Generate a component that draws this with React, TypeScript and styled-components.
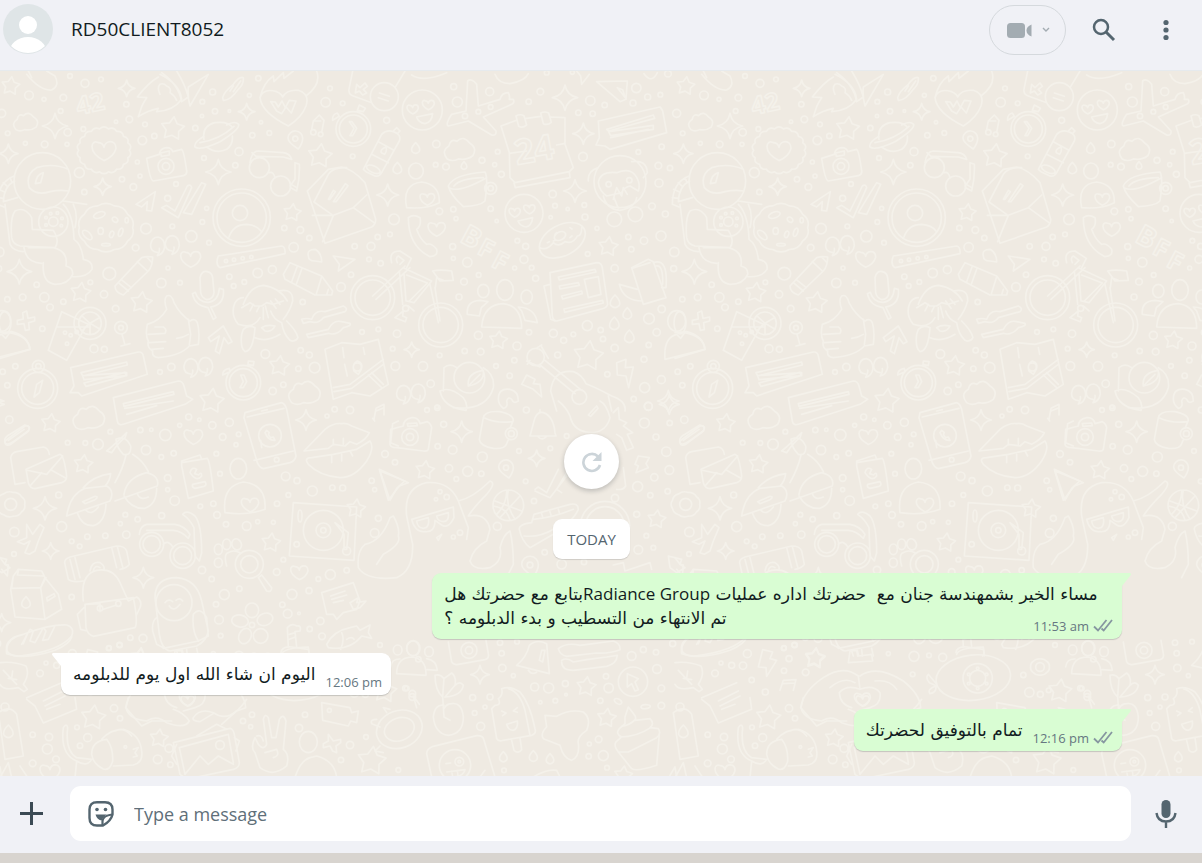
import React from "react";
import styled, { createGlobalStyle } from "styled-components";

const GlobalStyle = createGlobalStyle`
  * { box-sizing: border-box; }
  body { margin: 0; background: #d8d4cf; }
  button, input { font: inherit; border: 0; background: none; padding: 0; margin: 0; }
  button { cursor: pointer; }
`;

/* ---------- wallpaper ---------- */

type Group = {
  dx: number;
  dy: number;
  rings?: number[];
  stars?: number[];
  sparks?: number[];
  hearts?: number[];
  drops?: number[];
  pins?: number[];
  quotes?: number[];
  clouds?: number[];
  ellipses?: number[];
  scallops?: number[];
  lines?: string;
  words?: [string, number, number, number, number][];
};

const chunk = (list: number[] = [], size: number) => {
  const out: number[][] = [];
  for (let i = 0; i < list.length; i += size) out.push(list.slice(i, i + size));
  return out;
};

const ring = ([x, y, r]: number[]) =>
  `M${x - r} ${y}a${r} ${r} 0 1 0 ${2 * r} 0a${r} ${r} 0 1 0 ${-2 * r} 0Z`;

const ellipse = ([x, y, rx, ry, a]: number[]) => {
  const t = (a * Math.PI) / 180;
  const cx = rx * Math.cos(t);
  const cy = rx * Math.sin(t);
  return `M${x - cx} ${y - cy}A${rx} ${ry} ${a} 1 0 ${x + cx} ${y + cy}A${rx} ${ry} ${a} 1 0 ${x - cx} ${y - cy}Z`;
};

const star = ([x, y, r]: number[]) => {
  let d = "";
  for (let i = 0; i < 10; i++) {
    const a = (i * Math.PI) / 5 - Math.PI / 2 + 0.12;
    const q = i % 2 ? r * 0.55 : r;
    d += `${i ? "L" : "M"}${(x + q * Math.cos(a)).toFixed(1)} ${(y + q * Math.sin(a)).toFixed(1)}`;
  }
  return d + "Z";
};

const spark = ([x, y, r]: number[]) => {
  const k = r * 0.16;
  return `M${x} ${y - r}Q${x + k} ${y - k} ${x + r} ${y}Q${x + k} ${y + k} ${x} ${y + r}Q${x - k} ${y + k} ${x - r} ${y}Q${x - k} ${y - k} ${x} ${y - r}Z`;
};

const heart = ([x, y, s]: number[]) =>
  `M${x} ${y + s * 0.8}C${x - s * 1.5} ${y} ${x - s} ${y - s} ${x - s * 0.5} ${y - s * 0.7}Q${x - s * 0.1} ${y - s * 0.7} ${x} ${y - s * 0.3}C${x + s * 0.1} ${y - s * 0.9} ${x + s} ${y - s} ${x + s} ${y - s * 0.2}Q${x + s * 0.8} ${y + s * 0.5} ${x} ${y + s * 0.8}Z`;

const drop = ([x, y, s]: number[]) =>
  `M${x} ${y - s}Q${x + s} ${y} ${x + s * 0.6} ${y + s * 0.6}Q${x} ${y + s * 1.2} ${x - s * 0.6} ${y + s * 0.6}Q${x - s} ${y} ${x} ${y - s}Z`;

const pin = ([x, y, s]: number[]) =>
  `M${x + s * 0.4} ${y + s * 1.4}Q${x - s} ${y + s * 0.5} ${x - s} ${y - s * 0.1}A${s} ${s} 0 1 1 ${x + s} ${y}Q${x + s} ${y + s * 0.6} ${x + s * 0.4} ${y + s * 1.4}Z${ring([x, y, s * 0.35])}`;

const quote = ([x, y]: number[]) => {
  const one = (q: number, p: number) =>
    `M${q} ${p}q-22 -2 -20 -24q4 -22 22 -22q20 4 20 30q-4 22 -22 26q8 -12 6 -22`;
  return one(x - 18, y + 24) + one(x + 26, y + 20);
};

const cloud = ([x, y, s]: number[]) =>
  `M${x - s * 0.8} ${y + s * 0.6}Q${x - s * 1.2} ${y + s * 0.1} ${x - s * 0.7} ${y - s * 0.2}Q${x - s * 0.6} ${y - s * 0.7} ${x - s * 0.2} ${y - s * 0.5}Q${x + s * 0.2} ${y - s * 0.9} ${x + s * 0.6} ${y - s * 0.4}Q${x + s * 1.1} ${y - s * 0.1} ${x + s * 0.8} ${y + s * 0.4}Q${x + s * 0.4} ${y + s * 0.7} ${x - s * 0.1} ${y + s * 0.6}Q${x - s * 0.5} ${y + s * 0.8} ${x - s * 0.8} ${y + s * 0.6}Z`;

const scallop = ([x, y, r, n]: number[]) => {
  let d = "";
  for (let i = 0; i <= n; i++) {
    const a = (i * 2 * Math.PI) / n;
    const m = a - Math.PI / n;
    const px = (x + r * Math.cos(a)).toFixed(1);
    const py = (y + r * 0.86 * Math.sin(a)).toFixed(1);
    d += i
      ? `Q${(x + r * 1.15 * Math.cos(m)).toFixed(1)} ${(y + r * Math.sin(m)).toFixed(1)} ${px} ${py}`
      : `M${px} ${py}`;
  }
  return d + "Z";
};

/* Doodles are plotted on a grid three times finer than the page; one tile is 2025 units wide. */
const doodles: Group[] = [
  {
    dx: 0,
    dy: 0,
    stars: [32, 45, 28, 518, 173, 36, 960, 255, 37, 877, 425, 27, 242, 665, 31, 424, 695, 33, 838, 885, 31, 635, 990, 38],
    sparks: [165, 165, 38, 380, 52, 25, 740, 122, 25, 25, 248, 29, 655, 303, 38, 308, 347, 26, 1163, 372, 33, 58, 602, 37],
    hearts: [312, 240, 36, 572, 565, 30],
    quotes: [490, 520, 590, 885],
    clouds: [78, 153, 38, 915, 965, 50],
    pins: [886, 203, 22],
    scallops: [312, 238, 76, 18, 318, 470, 80, 10],
    ellipses: [298, 432, 18, 9, -20, 345, 446, 9, 7, 40, 302, 480, 8, 10, 0, 262, 492, 18, 9, 45, 318, 521, 13, 4, 0, 335, 490, 6, 10, 20, 362, 484, 6, 13, 20, 380, 448, 5, 8, 0, 15, 755, 18, 34, 0],
    rings: [
      87, 73, 13, 132, 85, 6, 190, 80, 10, 255, 37, 12, 210, 15, 7, 303, 25, 7, 182, 120, 7, 379, 100, 8, 388, 145, 10, 435, 160, 7,
      348, 152, 5, 250, 174, 7, 203, 184, 11, 134, 220, 10, 76, 217, 6, 23, 187, 7, 5, 127, 12, 201, 220, 6, 427, 208, 13, 463, 195, 8,
      412, 273, 6, 420, 315, 6, 238, 305, 15, 366, 325, 8, 400, 348, 10, 253, 363, 8, 503, 382, 9, 620, 412, 6, 528, 339, 7, 438, 473, 16,
      517, 466, 7, 574, 496, 17, 607, 453, 7, 627, 515, 7, 407, 530, 10, 484, 636, 14, 540, 635, 7, 328, 608, 19, 504, 591, 6, 312, 670, 11,
      271, 634, 7, 110, 641, 8, 133, 679, 14, 150, 709, 10, 190, 692, 8, 68, 679, 10, 22, 685, 8, 127, 773, 8, 347, 713, 10, 282, 833, 12,
      313, 835, 9, 46, 886, 8, 8, 902, 8, 22, 943, 8, 480, 903, 7, 514, 888, 11, 688, 617, 8, 733, 633, 7, 701, 645, 7, 773, 606, 14,
      817, 596, 12, 908, 693, 8, 881, 529, 14, 853, 471, 8, 901, 477, 10, 928, 501, 8, 1064, 526, 8, 1113, 526, 12, 1133, 498, 8, 1170, 490, 7,
      1107, 565, 7, 1142, 577, 8, 1053, 611, 8, 1023, 648, 13, 796, 849, 13, 902, 838, 8, 928, 852, 9, 944, 890, 16, 895, 893, 8, 850, 941, 8,
      818, 960, 11, 1086, 783, 7, 1135, 775, 7, 1178, 833, 7, 1186, 885, 13, 977, 94, 14, 1028, 97, 7, 1058, 256, 7, 1160, 148, 9, 1182, 445, 16,
      990, 52, 7, 775, 22, 8, 748, 73, 6, 638, 63, 9, 607, 92, 7, 645, 121, 8, 606, 135, 5, 688, 120, 4, 783, 154, 5, 757, 193, 8,
      808, 186, 7, 586, 171, 8, 612, 261, 7, 717, 242, 12, 706, 283, 8, 498, 286, 24, 498, 286, 11, 778, 290, 30, 842, 345, 30,
      127, 330, 85, 160, 452, 44, 160, 452, 14, 138, 440, 4, 152, 428, 4, 172, 426, 4, 186, 442, 4, 184, 464, 4, 138, 462, 4,
      725, 440, 86, 725, 440, 74, 720, 426, 23, 270, 757, 48, 270, 757, 34, 113, 952, 60, 113, 952, 48, 115, 886, 18, 115, 886, 8,
      363, 770, 19, 363, 770, 7, 730, 935, 52, 730, 935, 42, 1060, 174, 52, 1060, 174, 42, 940, 184, 8, 962, 190, 7, 1072, 888, 12,
      195, 785, 5, 212, 793, 5, 230, 783, 5, 201, 818, 5, 678, 570, 5, 702, 566, 5, 728, 562, 5, 754, 558, 5,
    ],
    lines:
      "M80 10Q120 60 155 57Q180 45 165 15L140 0M415 137L425 107Q430 95 440 80L412 78Q445 35 475 18M415 137Q440 120 475 112L470 122Q520 120 545 85Q540 40 480 10M530 0Q555 40 565 78L545 92Q535 40 485 5M480 70Q470 50 480 40Q490 35 500 45Q515 50 510 65Q525 75 530 88" +
      "M565 48L625 10L570 105Q562 75 565 48ZM668 80Q672 62 700 40Q718 15 730 20Q732 40 715 55Q690 90 670 88ZM700 45L690 60M722 30L700 62" +
      "M865 165Q785 125 780 80Q790 50 830 62Q845 68 848 78Q860 55 895 58Q930 70 918 105Q905 140 865 165ZM780 80Q790 35 820 15L822 32L850 5L852 22L880 0M918 75Q965 40 950 0M812 92L826 93L835 108L846 90L856 110L868 88L888 90L874 126L858 108L845 128L830 120Z" +
      "M935 175L940 150L958 132L972 148L965 184M942 150L962 150M1048 152L1062 172L1050 194L1058 194L1070 172L1056 152ZM1072 118L1078 102L1096 112L1090 122ZM998 148Q996 130 1012 126L1018 136Z" +
      "M612 205Q605 165 645 155Q685 150 698 170M620 228Q650 250 680 235Q700 220 697 195M612 196Q580 215 585 228Q600 240 660 212Q720 175 716 160Q705 148 680 162M600 215Q660 205 702 166" +
      "M440 262L478 250Q480 232 500 230Q515 230 518 242L545 235Q552 240 560 300Q562 310 550 314L460 330Q450 328 440 262ZM482 246L508 240L508 252L484 256Z" +
      "M750 275Q755 240 775 240L850 245Q870 248 875 265L850 258L770 256M808 305Q820 300 825 320M872 350L890 360Q900 320 898 280L885 275L885 325L870 345M756 245L768 256M874 340L890 350" +
      "M205 360Q180 355 150 362Q110 375 88 350Q75 310 110 290Q160 275 205 295M106 338Q110 310 130 305L122 335ZM42 315Q-8 335 -8 400L12 408M44 330Q12 345 10 392L52 380M30 320L36 334M10 335L22 346M-4 355L12 362M-8 380L10 382M15 400L30 520Q40 540 70 542M35 500Q30 440 45 420Q75 405 95 440L97 475L160 478Q180 510 165 530L60 525Q38 520 35 500ZM72 530Q78 575 125 577M85 530L160 530Q205 540 198 585Q220 590 218 610Q205 640 165 640Q125 635 130 575M190 400Q220 430 222 505Q245 520 250 565Q280 570 276 595Q260 620 218 617M190 390L260 400M220 400Q235 430 225 470" +
      "M408 400L466 362L455 420L440 418L442 392L425 408ZM485 410L500 403L525 420L562 345Q572 338 575 350L535 440ZM550 425L605 335L617 340L575 430Z" +
      "M687 498Q700 460 740 460Q770 462 783 480M922 360L985 295L1025 288Q1060 295 1095 335L1127 445Q1128 460 1115 468L975 517ZM937 433L1000 433L1060 410L1122 455M1000 433L968 512M1060 410L1100 372M942 393L985 310Q1000 288 1040 290M942 393L995 430M985 385L1000 358L1006 362L990 385ZM1000 392L1036 338L1044 344L1008 392Z" +
      "M655 555L845 525Q857 528 855 548L660 590Q645 580 655 555ZM345 645L425 560Q440 555 458 558Q458 585 445 600L370 672Q345 665 345 645ZM412 572L442 600M355 635L385 660M364 626L394 650M440 558L456 575M850 610L870 575L965 615L998 660L995 672L945 672L855 625ZM965 617L948 672M892 585L875 632M906 592L889 640M985 655L980 672" +
      "M1000 555L1065 565L1015 600L1018 580ZM925 555Q920 535 945 535Q965 545 965 573L945 570Q925 570 925 555ZM600 620Q605 598 622 602Q636 605 638 620L642 665Q640 685 620 686Q605 680 602 665ZM577 668L586 664Q595 695 625 694Q655 690 658 652L670 655Q675 700 632 708L648 740L640 745L624 710Q585 705 577 668Z" +
      "M715 760Q690 730 705 695Q715 680 730 680M730 700Q750 645 790 643Q840 650 862 690M835 660Q880 650 878 690Q870 720 850 745M725 710L750 695L765 705L785 705L800 695L820 700L850 690M750 720L760 700M770 722L778 706M790 745L790 710M805 740L796 705M828 712L812 690M840 700L826 684M725 790Q720 830 735 842Q760 840 765 770Q745 760 730 775ZM715 760Q760 775 780 740M860 750Q890 780 894 800Q885 815 870 808Q850 790 845 755Q820 745 812 720M765 800Q800 815 840 790M785 770Q800 760 825 765Q815 785 795 780Z" +
      "M905 745Q920 740 935 745Q945 715 975 722L1030 705Q1045 712 1035 722L970 740Q955 760 930 752L910 757ZM920 790L985 775Q1000 745 1025 752L1050 757Q1055 765 1030 770Q1010 795 985 787L925 800ZM68 725L80 720L84 742L104 738L104 750L86 755L88 776L76 778L72 758L52 760L52 748L70 744Z" +
      "M185 722L145 838L200 868L255 770L265 760ZM170 768L270 768M270 757L298 740M270 757L300 775M270 757L270 790M270 757L245 780M270 757L246 735M366 790L375 822M363 825L390 818" +
      "M442 760Q480 750 500 715Q490 685 500 675Q515 668 522 695Q540 730 570 750Q585 740 592 755Q600 780 595 820L568 825Q540 855 475 860Q455 858 458 840Q440 830 445 810Q435 795 442 760ZM445 790L495 787Q502 775 490 768L465 768M447 815L497 812M455 835L490 832M565 745L572 790L568 822M530 802Q550 800 565 790" +
      "M625 800L670 765L696 812L685 818L672 800L658 848L646 840L658 795L632 812ZM128 928L118 965L102 978L110 940Z" +
      "M212 890L415 843Q428 842 430 855L442 910L245 975L235 965L210 965L222 945ZM243 905L380 873L382 882L248 915ZM248 914L380 905L380 914L252 926ZM252 936L375 904L378 914L258 946Z" +
      "M340 980L535 930Q548 930 552 945L560 975L578 985L555 1000L370 1060Q355 1065 352 1050ZM370 998L520 962L522 970L372 1006ZM374 1012L520 990M380 1030L470 1004" +
      "M722 912L730 932L720 950L730 950L740 932L732 912ZM745 870L762 872L760 884L744 880ZM668 912Q668 895 688 892L690 902Z" +
      "M975 835L1025 815L1080 820L1135 805L1165 940L1110 975L1055 965L1000 985ZM1000 950L1050 940L1150 865M1002 962L1055 952L1150 880M1105 912L1145 950M1115 905L1150 940M1028 830L1032 860M1034 880L1042 915M1090 830L1094 850M1062 900Q1055 880 1072 870Q1090 875 1084 895L1075 910Z" +
      "M0 785L35 782Q85 795 90 835L0 862",
    words: [["42", 235, 132, 74, -12]],
  },
  {
    dx: 1020,
    dy: 0,
    stars: [475, 808, 28, 745, 855, 46, 805, 527, 30],
    sparks: [675, 80, 38, 730, 188, 32, 705, 360, 34, 215, 836, 23, 985, 990, 32],
    hearts: [218, 115, 17, 265, 102, 18, 524, 425, 17, 568, 415, 17, 262, 385, 22, 290, 475, 26],
    drops: [227, 232, 17, 172, 292, 18, 372, 284, 12, 825, 692, 20, 862, 728, 18, 823, 758, 20, 868, 797, 20],
    quotes: [208, 965],
    clouds: [360, 235, 48],
    ellipses: [228, 300, 22, 24, 0, 667, 508, 74, 46, -28, 660, 495, 18, 12, -28, 430, 660, 17, 20, 0, 495, 657, 25, 31, 0, 560, 678, 17, 21, 0, 1010, 750, 27, 31, 0, 823, 445, 22, 22, 0, 886, 430, 22, 22, 0, 100, 295, 22, 10, 25],
    rings: [
      341, 47, 9, 449, 62, 12, 352, 93, 15, 289, 219, 11, 287, 281, 7, 318, 287, 10, 426, 268, 9, 473, 242, 7, 464, 281, 6, 484, 310, 9,
      601, 62, 10, 566, 92, 8, 751, 89, 14, 794, 102, 8, 715, 125, 8, 758, 128, 8, 729, 257, 13, 889, 51, 14, 923, 78, 9, 961, 71, 7,
      879, 96, 9, 620, 5, 7, 697, 4, 6, 984, 8, 10, 965, 227, 8, 895, 243, 7, 955, 284, 10, 990, 291, 8, 957, 336, 12, 936, 406, 10,
      976, 429, 9, 638, 369, 11, 645, 404, 7, 683, 414, 5, 733, 402, 7, 735, 438, 9, 632, 439, 5, 771, 472, 6, 865, 498, 8, 912, 509, 11,
      963, 495, 15, 874, 535, 8, 1003, 543, 14, 743, 549, 7, 824, 592, 11, 452, 413, 8, 298, 421, 10, 340, 415, 8, 348, 443, 6, 470, 450, 5,
      338, 527, 9, 340, 562, 6, 382, 574, 14, 416, 612, 7, 372, 632, 10, 357, 678, 9, 532, 509, 7, 557, 526, 9, 552, 565, 12, 524, 591, 6,
      575, 590, 7, 587, 622, 9, 742, 764, 15, 782, 777, 8, 700, 790, 7, 789, 804, 8, 671, 808, 9, 640, 787, 12, 567, 784, 8, 531, 825, 12,
      523, 868, 8, 415, 793, 12, 422, 842, 10, 374, 840, 8, 299, 853, 7, 468, 885, 7, 509, 914, 8, 249, 886, 14, 272, 938, 11, 171, 788, 11,
      291, 1008, 5, 653, 852, 9, 802, 910, 8, 824, 831, 11, 881, 984, 8, 914, 950, 15, 925, 1006, 12, 912, 865, 9, 964, 926, 12,
      926, 822, 8, 927, 743, 16, 965, 714, 11, 950, 784, 11, 1001, 593, 9, 247, 117, 60, 552, 427, 57, 133, 77, 42,
      98, 680, 66, 98, 680, 53, 302, 762, 66, 302, 762, 53, 197, 712, 9, 452, 352, 18, 452, 352, 8, 718, 978, 22, 587, 858, 26,
      806, 340, 8, 868, 328, 8, 840, 332, 78, 388, 920, 46, 375, 135, 8, 415, 122, 7, 452, 108, 7,
    ],
    lines:
      "M38 0L27 55Q25 70 40 75L95 95M195 0L165 50M50 40L60 50L75 36L82 46L70 55L80 66L68 72L58 60L46 66ZM118 66L148 76M115 80L145 90M465 10Q475 38 510 38Q555 30 565 8M215 12Q250 35 320 5M710 0L722 15L725 40L748 10M912 8Q935 40 952 5" +
      "M70 295L125 190Q140 175 160 182Q185 190 178 210L125 305Q118 318 105 315L78 302ZM115 212L162 238M95 250L145 275M160 180L170 170L180 180L172 188M124 245Q120 235 138 228Q142 240 134 250Z" +
      "M230 138L278 128Q275 155 255 158Q235 155 230 138ZM534 450L578 440Q575 465 558 468Q540 465 534 450Z" +
      "M383 30Q395 20 410 40L415 105L480 85Q485 65 505 65Q510 75 508 85L520 85Q525 95 515 100L430 138L468 180Q470 195 455 192L385 150L325 165Q315 160 335 130L378 120Z" +
      "M530 148L483 165L508 245L510 320L525 335L688 302L700 290L675 220L675 140L632 138M555 143L602 136M522 336L526 350L690 320L688 302M508 247L560 240M650 222L672 218M528 135Q540 128 552 134L560 162Q548 172 536 166ZM602 126Q614 120 626 126L634 154Q622 164 610 158Z" +
      "M775 150L960 108Q968 115 970 130L980 185L810 235L795 225L768 222L778 200ZM800 175L940 132L944 142L806 180ZM806 182L940 163L940 175L812 194ZM812 200L925 175M770 32L862 30L858 85L840 92ZM832 50L848 56L856 80ZM1090 0L1100 20" +
      "M775 335Q780 300 830 305Q880 285 895 330Q900 345 895 360L870 345Q850 350 845 365L800 375Q778 360 775 335ZM745 330Q742 300 775 290M875 272Q920 265 922 305L910 320M820 385L830 350L845 375L850 350L862 370M790 375Q800 415 840 418Q885 410 890 380M822 380L835 412" +
      "M325 345Q340 310 435 303Q445 320 435 390Q420 405 370 407Q330 370 325 345ZM330 352Q360 365 440 320M342 345Q360 322 430 320M200 410Q185 340 245 333Q300 340 298 395Q260 415 200 410Z" +
      "M205 440Q220 428 240 440Q245 465 230 475Q240 505 260 520Q275 515 290 535Q295 555 270 557Q205 525 205 440ZM600 530Q620 540 640 515Q655 530 675 512Q700 520 712 495Q725 495 725 470M622 515L628 512M645 490L650 485M690 470L696 474M640 510L646 508M690 500L696 495" +
      "M98 675L195 585M108 685L210 590M178 600L188 700M192 610L198 690M190 590L275 630L222 695L200 690M200 612L262 636L208 690M270 640L295 755M285 650L300 750M286 650L290 620L310 628M278 600Q300 595 335 600L340 628L300 630ZM155 575Q145 540 180 540L214 562L200 590M172 575Q165 560 175 555L192 568L180 580M165 740L190 720L188 735L200 740L196 752ZM205 705L222 720" +
      "M382 730Q378 690 420 688L444 692L424 710L418 735ZM425 768Q430 700 490 698Q545 705 545 772ZM535 708Q585 710 592 755L555 748L545 720ZM975 865Q970 800 1010 790L1022 802L1034 785Q1090 795 1095 835Z" +
      "M630 605L770 575Q785 575 787 590L803 700Q800 712 780 715L650 750Q640 750 637 735ZM630 640L612 645L632 745L645 750M655 618L765 595L768 603L658 627ZM658 645L715 635L718 643L660 654ZM665 675L725 660L727 668L668 684ZM672 714L788 688L790 696L674 724ZM733 625L775 617L783 670L745 680Z" +
      "M875 590L925 565L940 572L978 680L910 700ZM908 690Q850 690 838 640L892 655M940 575Q985 560 978 650L965 650M948 585Q970 580 968 640M878 592L930 575" +
      "M600 882L705 968M615 868L725 958M560 870L600 888M605 828L625 862M570 868L562 880M592 830L605 822M632 960Q640 895 700 902Q725 910 738 938Q770 950 815 975Q860 990 855 1020M632 960L650 1020M805 975L815 1020" +
      "M830 875L858 865L856 890L880 888L866 950L858 915L832 912ZM545 940L560 912L585 925L580 938L600 940L605 978L580 955Z" +
      "M310 960L312 890Q330 875 350 890M300 960Q330 945 370 980Q385 1000 378 1018Q310 1010 300 960ZM430 890Q465 910 460 950Q440 1020 340 1010M385 945Q380 905 430 898Q435 935 385 945ZM385 945L420 910M475 985Q475 950 510 955Q535 960 535 990Q520 1000 515 985Q505 975 500 990Q505 1010 490 1012Q475 1000 475 985Z",
    words: [
      ["24", 530, 282, 104, -10],
      ["B", 356, 510, 84, 28],
      ["F", 408, 546, 76, 28],
      ["F", 450, 584, 76, 28],
    ],
  },
  {
    dx: 0,
    dy: 990,
    stars: [152, 67, 29, 250, 190, 29, 813, 425, 29, 1068, 323, 29],
    sparks: [918, 57, 31, 135, 322, 35, 152, 450, 25, 430, 530, 31, 5, 665, 27],
    hearts: [580, 108, 28, 750, 312, 26, 898, 515, 26],
    clouds: [268, 50, 50],
    scallops: [32, 310, 42, 9],
    drops: [78, 605, 18],
    ellipses: [715, 203, 25, 31, 0, 655, 445, 12, 16, 0, 680, 430, 12, 16, 0, 710, 430, 14, 17, -20, 655, 485, 12, 14, 0, 756, 628, 20, 22, 0, 720, 660, 25, 18, 10, 735, 705, 18, 24, 25, 782, 705, 22, 22, 0, 795, 655, 24, 18, -20, 900, 345, 6, 18, 0],
    rings: [
      28, 56, 11, 203, 125, 7, 256, 126, 7, 294, 130, 16, 331, 92, 7, 438, 147, 14, 421, 87, 8, 454, 86, 5, 496, 102, 17, 539, 73, 6,
      566, 48, 9, 598, 56, 5, 637, 73, 11, 688, 64, 12, 668, 108, 10, 708, 131, 6, 716, 100, 7, 484, 168, 7, 521, 157, 8, 503, 231, 10,
      503, 266, 6, 524, 299, 14, 649, 158, 7, 660, 218, 7, 601, 316, 7, 640, 308, 8, 651, 342, 10, 678, 370, 8, 740, 375, 13, 773, 362, 6,
      820, 364, 6, 865, 282, 7, 857, 226, 13, 891, 239, 9, 831, 308, 8, 937, 270, 15, 997, 260, 8, 1028, 261, 9, 1004, 25, 8, 1050, 27, 11,
      981, 45, 6, 1115, 239, 8, 1124, 266, 6, 1135, 352, 9, 1124, 396, 13, 1155, 159, 10, 1185, 184, 8, 176, 282, 9, 376, 341, 7, 413, 355, 8,
      485, 344, 9, 361, 368, 6, 379, 401, 11, 185, 377, 15, 262, 407, 8, 316, 404, 8, 215, 421, 7, 239, 436, 7, 43, 393, 14, 42, 459, 7,
      215, 588, 8, 606, 507, 11, 635, 534, 8, 718, 563, 8, 673, 581, 15, 648, 610, 8, 657, 656, 13, 662, 704, 7, 830, 513, 10, 850, 476, 7,
      876, 580, 15, 927, 569, 9, 955, 534, 7, 991, 521, 15, 1040, 508, 8, 847, 611, 8, 863, 638, 13, 897, 637, 4, 961, 660, 11, 929, 684, 8,
      966, 706, 10, 391, 710, 8, 429, 712, 12, 359, 732, 8, 326, 742, 7, 32, 310, 18, 810, 104, 34, 830, 176, 7, 970, 388, 60, 970, 388, 22,
      970, 388, 8, 890, 430, 8, 1040, 450, 12, 455, 430, 36, 455, 430, 26, 548, 464, 38, 548, 464, 27, 748, 490, 42, 748, 490, 26,
      522, 605, 54, 300, 622, 8, 355, 608, 8, 756, 672, 8,
    ],
    lines:
      "M15 125Q10 110 30 100L75 72Q95 75 85 90L40 122Q20 135 15 125ZM25 118L72 85M35 125L80 95M45 250L32 170Q35 155 50 152L130 138Q145 140 148 160M45 250L75 245M78 205L180 160Q192 162 200 225Q200 240 185 245L105 263Q90 262 85 245ZM78 207L140 220L188 165M90 255L125 215M198 232L155 208" +
      "M200 345Q210 280 255 262L320 255Q345 270 330 300L200 345ZM250 260Q280 225 332 218Q330 240 315 255M248 302L285 286Q298 286 285 296L255 308ZM232 335Q245 375 280 374Q315 365 318 310M258 328Q275 345 295 318M320 150Q345 130 380 95L375 110Q355 125 335 155ZM348 115Q375 100 392 135Q395 165 370 160Q350 140 348 115M378 162Q370 200 345 245M398 160Q430 180 445 212M372 280Q380 230 440 215Q480 225 472 255L345 300M372 285Q395 325 435 322Q470 310 470 262M412 278Q420 300 445 288" +
      "M545 180L600 162L605 175L622 172Q630 180 640 270L565 292L545 195ZM545 185L622 172M570 215Q575 195 590 205L584 218L596 222Q605 210 605 225Q590 245 570 215ZM578 250L615 242Q622 252 612 256L585 262Q575 260 578 250ZM675 335Q665 255 730 243Q800 250 795 325Q740 345 675 335Z" +
      "M735 35L845 5Q855 8 860 25L888 165Q885 180 870 185L790 203Q778 200 772 185L732 50ZM742 48L852 22M762 178L880 150M785 30L802 26M785 140L782 118M795 95Q805 120 825 118L820 108L812 110Q802 100 808 95L800 88Z" +
      "M912 150L975 85Q1000 65 1025 68Q1040 65 1055 75L1108 95Q1100 115 1070 130L1050 122L1035 135L1000 130L985 142ZM1110 120Q1125 140 1100 180Q1065 230 1020 230Q960 225 925 190Q910 170 935 170L1000 160L1070 145ZM1000 115L1000 132M1030 112L1030 130M995 165L995 185M1025 160L1025 180M1050 150L1058 165" +
      "M1122 55L1128 22L1152 10L1152 42M1128 30L1152 20M1118 52L1124 60M1195 60L1178 68L1172 125L1195 135M880 305L1070 318L1062 478L868 465ZM1005 365L1045 395L1040 445L1032 445L1032 400ZM1140 210L1215 240L1190 262L1170 298Z" +
      "M418 400Q420 375 440 370L525 370Q555 375 570 400L565 412Q545 390 520 388L440 388M490 430Q505 415 520 440M548 340Q560 325 585 345Q605 370 605 455L598 480L585 465L582 380Q570 355 548 340Z" +
      "M680 495Q670 460 685 455Q700 445 720 455M775 530L785 522L815 560Q815 575 800 570ZM0 470L15 490L25 492L22 525L5 505M80 370L98 400L120 370L132 380L115 420L105 450L88 460L75 455L90 420L72 430L52 422L80 410Z" +
      "M195 490Q190 475 210 468L350 435Q375 435 380 450L388 490Q380 502 360 505M195 490L205 535Q215 545 250 540M210 475L225 535M225 470L240 530M335 440L350 500M352 437L368 498M270 510Q275 480 300 485Q315 495 312 505M280 508Q285 490 300 500M250 600Q240 520 290 508Q340 500 360 545L385 600M255 610L400 590Q415 665 405 680L280 706Q262 700 258 680ZM252 620L232 640L242 685L262 690M385 600L410 588Q428 600 420 620L408 645M258 610L300 608L300 632M310 625L350 612" +
      "M40 525L55 505L125 510L135 530L175 580L185 625L135 655L45 648L32 565ZM55 510L52 522L130 525M40 525L35 562L122 560L135 530M122 560L135 655M140 590L162 578L165 586L142 600ZM122 560L138 530" +
      "M20 735Q25 710 70 700Q150 670 200 672Q225 680 215 705Q180 750 60 765Q15 765 20 735ZM65 730L90 685L100 690L90 720L105 725L130 680L138 690L128 718L145 715L165 675" +
      "M465 590Q465 530 530 530Q590 535 605 600L625 690Q620 720 590 735L510 750Q485 745 478 700ZM470 650Q455 660 458 690L470 730L490 740M580 640Q600 615 620 650L625 705L595 720Q575 690 580 640ZM495 605Q505 592 518 602M528 598Q540 588 548 600M508 615Q520 635 540 610M530 750L535 765M545 748L548 765M560 746L562 765M590 742L595 765" +
      "M845 760Q850 740 925 738L928 765M865 738L862 680Q875 665 890 675Q905 672 900 690L885 692L890 738M868 700L886 695M868 715L886 708M965 575L1060 545L1080 600L1070 625L1030 635L1010 655L1000 640L980 640ZM992 585L1035 570M995 595L1040 582M1000 605L1030 598M1050 605L1075 590L1070 605L1098 600L1080 620L1060 625Z" +
      "M980 730Q1000 690 1050 680L1070 675L1080 688L1110 672L1105 695L1115 712L1085 705Q1050 750 985 740ZM1025 695Q1035 715 1022 745M1040 715Q1055 705 1062 715",
  },
  {
    dx: 1020,
    dy: 990,
    stars: [255, 208, 29, 950, 355, 28],
    sparks: [365, 92, 32, 590, 172, 25, 988, 10, 30],
    pins: [498, 200, 22, 570, 492, 25],
    rings: [
      311, 70, 9, 293, 136, 8, 338, 146, 13, 427, 168, 15, 327, 202, 11, 383, 211, 15, 424, 218, 8, 349, 234, 7, 537, 150, 7, 631, 142, 7,
      559, 27, 9, 925, 16, 12, 913, 66, 15, 989, 66, 8, 948, 108, 9, 979, 152, 14, 988, 207, 13, 943, 229, 11, 893, 257, 15, 983, 271, 8,
      931, 283, 8, 557, 241, 7, 582, 300, 8, 472, 376, 12, 825, 291, 11, 890, 340, 9, 919, 404, 7, 940, 440, 7, 895, 446, 13, 665, 490, 14,
      732, 483, 8, 614, 454, 8, 261, 27, 7, 292, 20, 8, 680, 105, 7, 210, 108, 25, 210, 108, 11, 514, 98, 18, 514, 98, 9, 505, 313, 46,
      300, 272, 6, 320, 288, 8, 288, 295, 5, 340, 408, 6, 360, 395, 8, 795, 375, 74, 795, 375, 58,
    ],
    lines:
      "M152 85L190 75Q190 55 215 50Q235 48 240 68L262 62Q272 66 275 80L265 145Q262 152 250 150L170 140Q152 140 150 130ZM202 68L230 66L232 74L204 76Z" +
      "M430 50Q435 28 480 32Q520 40 520 58L510 82M432 50Q470 68 518 62M430 50L418 115Q420 135 460 142Q495 145 500 128M500 128L506 114M570 105L582 60Q590 30 610 35Q640 45 645 95L648 105L570 105M595 108Q605 120 620 106M600 35L600 26" +
      "M655 0Q680 20 690 45Q700 95 760 95Q800 90 810 50Q800 10 780 0M745 42L770 15L774 22L752 46ZM820 35L835 20L838 55L860 65L850 75L878 95L862 100L880 140L860 148L845 110L830 100M1020 120L1080 75Q1098 72 1090 90L1040 128Q1020 140 1020 120Z" +
      "M118 205L205 245L178 255L145 298ZM200 345Q190 260 260 245Q330 240 355 300L385 380L380 415M215 355L340 318L342 350Q325 385 305 372L285 358Q285 395 255 392Q225 395 215 355ZM230 360L265 350Q270 380 250 382Q232 380 230 360ZM290 345L325 335Q328 362 310 362Q292 360 290 345ZM200 345L218 430Q220 510 170 530Q80 540 55 500Q50 450 75 430Q125 420 150 350L160 345Q180 380 175 405Q185 430 130 460L110 490M290 410L305 400L295 418ZM355 300Q400 290 450 240Q470 245 440 280Q400 320 385 345Q440 335 450 385L440 420Q400 440 390 480Q400 510 450 500Q490 480 480 440Q490 400 510 390Q520 430 520 490L500 530" +
      "M465 300L545 330M480 350L540 285M505 267Q495 310 525 355M470 340Q500 310 500 270M460 315Q500 320 510 357M585 265L595 258L620 275L655 205M585 270L630 290L680 225M700 180L650 265L665 275M850 200L857 255Q850 268 830 265M885 190L895 165L928 170L918 188L925 200L888 215L895 195ZM538 385Q535 370 575 365L582 340L690 310Q715 305 715 325Q700 360 640 400L570 440Q545 420 538 385ZM580 355Q640 350 700 325M552 405Q600 410 640 385M605 338L608 348M630 332L633 342M655 325L658 335" +
      "M820 492L850 485L855 510L930 485L935 505M985 465L1025 475L1020 490L1035 500L1010 515L990 500Z",
  },
  {
    dx: 0,
    dy: 1710,
    stars: [280, 230, 38, 477, 292, 28, 1115, 360, 44],
    drops: [25, 272, 20],
    hearts: [562, 175, 24, 150, 395, 30],
    ellipses: [925, 303, 27, 32, 0, 1198, 265, 46, 34, -20, 1198, 265, 70, 56, -20, 660, 312, 13, 13, 0],
    rings: [
      120, 97, 10, 98, 281, 8, 147, 288, 11, 142, 324, 15, 98, 367, 10, 168, 355, 10, 231, 259, 7, 263, 290, 12, 240, 314, 8, 342, 202, 11,
      360, 232, 8, 507, 322, 12, 473, 355, 13, 511, 371, 8, 729, 240, 8, 756, 221, 8, 752, 257, 6, 915, 221, 8, 897, 261, 11, 1098, 288, 7,
      1050, 312, 11, 1023, 357, 8, 1195, 387, 7, 15, 198, 12, 988, 208, 6, 376, 318, 4,
    ],
    lines:
      "M0 65Q40 60 78 75Q90 100 70 130L82 145L72 152L55 140Q10 150 0 130M10 88L50 130M35 112L38 90M25 112L50 116M80 170L185 125M225 170L230 205L130 246L105 195L80 175M130 180L190 150M135 195L195 165M140 205L180 190" +
      "M-5 215Q30 190 50 220L70 345L15 355ZM190 260Q200 245 203 260Q195 330 230 350L275 355Q260 380 230 360Q180 340 190 260ZM230 360L225 410M275 340Q275 300 320 295Q340 320 338 360Q330 390 310 384Q280 370 275 340ZM305 295Q330 265 370 265Q420 280 425 330Q430 365 400 372L340 375M345 270Q370 255 395 285M400 325L415 320L405 335L412 345L400 348" +
      "M385 170L378 200Q385 235 440 240Q470 220 500 245Q555 265 568 240Q550 215 520 205M580 230Q600 200 640 215Q690 250 740 175M580 230Q575 240 600 242L640 218" +
      "M520 305L690 262Q700 265 703 280L718 365Q718 380 700 385L560 415L540 400ZM538 320L685 280L700 365M538 320L555 400M555 400L600 345L625 370L655 345L700 370M590 285L650 250L680 265M703 290L718 300L708 330M530 310L515 345L530 370" +
      "M765 290Q750 320 765 335L780 380Q820 410 860 375Q870 340 850 325L858 240Q850 215 838 235L828 290L815 290L805 230Q795 215 790 235L800 310Q790 330 775 310ZM770 285Q785 280 790 300M795 335L830 325Q840 345 820 350M885 410Q900 360 930 350L950 345Q1005 360 1010 410" +
      "M965 185L1050 200L1055 215L1075 210L1070 245L1052 240L1045 255L968 238ZM1130 235Q1110 235 1115 248L1140 258M1140 315L1125 330L1150 335M1160 215L1150 200L1170 205M1250 200L1240 165L1258 190M985 280L1000 300L1022 295L1022 305L1008 315L1010 335L998 330L990 315L970 320L970 308L985 300ZM0 410L25 365L35 410M60 375L80 405",
  },
  {
    dx: 315,
    dy: 1470,
    stars: [105, 290, 30, 840, 390, 36],
    hearts: [248, 420, 20],
    scallops: [780, 318, 28, 8],
    ellipses: [580, 350, 112, 68, -6, 925, 262, 20, 23, 0],
    rings: [
      402, 286, 15, 447, 283, 7, 488, 289, 12, 398, 340, 7, 325, 278, 6, 730, 342, 8, 748, 394, 14, 781, 400, 9, 806, 388, 7, 905, 382, 7,
      922, 408, 10, 940, 295, 8, 825, 252, 7, 593, 352, 44, 593, 352, 24, 593, 322, 4, 620, 340, 4, 620, 368, 4, 593, 382, 4, 566, 368, 4, 566, 340, 4, 780, 318, 13,
    ],
    lines:
      "M528 275Q530 255 560 258L610 265Q615 280 608 285M470 370L445 340Q435 350 448 365L470 375M468 375Q440 385 450 398Q470 395 468 375M175 262L280 240M205 305L210 270L232 268L236 285L275 280L278 300ZM62 440Q70 390 130 350Q190 310 235 345L240 385Q200 370 178 395Q180 430 215 440M240 385Q280 370 300 395Q305 430 270 440L235 450M240 345Q290 310 370 360Q420 400 422 440L395 450L350 490M62 440L110 495L140 480L200 480M150 380Q190 345 225 365M285 360Q330 355 350 385",
  },
  {
    dx: 1140,
    dy: 1698,
    stars: [619, 149, 30, 680, 243, 29, 730, 415, 28],
    sparks: [300, 113, 28],
    drops: [370, 360, 16, 460, 358, 17, 510, 366, 16],
    ellipses: [53, 39, 13, 15, 0, 99, 34, 19, 22, 0, 147, 44, 13, 15, 0, 714, 193, 12, 7, 30, 797, 209, 14, 6, -5],
    rings: [
      360, 17, 8, 365, 49, 8, 411, 14, 7, 367, 93, 11, 400, 116, 6, 464, 150, 12, 506, 153, 15, 556, 140, 9, 526, 191, 7, 558, 173, 4,
      481, 196, 5, 678, 118, 8, 686, 153, 14, 755, 57, 13, 790, 38, 9, 828, 46, 8, 878, 20, 9, 831, 96, 13, 844, 154, 10, 661, 191, 8,
      844, 206, 10, 278, 182, 9, 330, 180, 9, 315, 210, 6, 284, 228, 7, 302, 268, 12, 656, 307, 10, 628, 321, 6, 626, 358, 8, 670, 356, 15,
      681, 392, 7, 372, 400, 7, 76, 154, 8, 97, 170, 10, 267, 40, 24, 267, 40, 11, 759, 134, 44, 225, 385, 47, 238, 374, 13, 238, 374, 4,
    ],
    lines:
      "M50 110Q50 62 95 60Q140 65 138 115ZM32 90Q35 65 60 66M140 65Q170 70 172 100L142 98M205 15L215 75Q220 85 235 82L315 68Q328 65 325 50L318 10" +
      "M410 85Q440 60 448 25Q470 5 500 20L508 110ZM445 100Q455 115 470 106M485 40L495 40L488 75L478 70ZM535 35Q560 15 600 25L700 12Q722 20 720 38Q690 50 650 48L560 58Q540 55 535 35ZM545 70Q560 60 580 75L620 68L680 60L712 55M545 75Q545 100 580 100L680 88Q710 80 712 55" +
      "M742 110L775 125L765 135L775 158L765 162L755 140L742 150ZM165 115Q180 110 192 125Q190 150 188 180Q165 160 165 115ZM192 125L215 108Q230 120 225 145L195 180M225 145Q240 130 250 145Q245 175 198 180M188 180L192 240L210 250M192 205Q165 200 160 240Q165 290 205 295Q250 290 250 240Q245 195 215 200Q200 200 192 215" +
      "M335 215L350 305Q355 315 370 310L455 295Q470 290 465 275Q450 200 420 165Q390 145 365 155Q370 175 355 185Q365 205 345 205ZM385 155Q420 165 435 220L450 295M365 222L378 228L368 236M412 212L400 222L412 226M380 262L412 252Q415 275 400 280Q385 280 380 262ZM395 310L402 340Q415 352 425 338L420 302" +
      "M495 235L530 238Q570 215 610 225Q635 245 620 280Q590 300 595 320Q600 360 575 370Q550 365 540 325L490 305Q480 290 500 270ZM735 240L745 210L762 232Q770 240 765 250L810 245Q825 260 810 272L835 275Q845 290 830 302L775 330L745 345L715 345Q700 325 708 315L725 300Q705 290 718 275L735 260ZM715 345L755 395Q770 405 830 385L838 290M720 300Q770 300 812 272M725 268Q750 265 765 248" +
      "M140 350Q140 335 160 328L290 296Q310 295 312 310L345 420M140 350L155 420M200 405L255 398Q250 420 215 420M215 403L218 418M232 401L234 416M198 380L212 378M300 420L315 400M905 50Q900 20 930 0M905 50Q960 70 1050 40Q1095 20 1100 0M955 20L965 -5M460 420Q500 395 530 400L540 420M870 415L885 390L890 420",
  },
  {
    dx: -885,
    dy: 1698,
    stars: [1305, 65, 31],
    rings: [1102, 50, 12, 1023, 78, 6, 1055, 85, 9, 1089, 86, 11, 1115, 129, 8, 1212, 33, 7, 1243, 24, 7, 1227, 65, 9, 1212, 101, 8, 1277, 106, 10, 1156, 165, 9],
    lines:
      "M1135 90L1148 38L1178 45L1170 65L1190 70L1160 118L1158 92ZM1200 160L1210 130L1248 128L1240 160M1210 140L1245 138",
  },
];

const groupPath = (g: Group) =>
  [
    ...chunk(g.rings, 3).map(ring),
    ...chunk(g.ellipses, 5).map(ellipse),
    ...chunk(g.stars, 3).map(star),
    ...chunk(g.sparks, 3).map(spark),
    ...chunk(g.hearts, 3).map(heart),
    ...chunk(g.drops, 3).map(drop),
    ...chunk(g.pins, 3).map(pin),
    ...chunk(g.quotes, 2).map(quote),
    ...chunk(g.clouds, 3).map(cloud),
    ...chunk(g.scallops, 4).map(scallop),
    g.lines ?? "",
  ].join("");

const WallpaperSvg = styled.svg`
  position: absolute;
  inset: 0;
  width: 100%;
  height: 100%;
  fill: none;
  stroke: #f4f1ea;
  stroke-width: 5;
  stroke-linecap: round;
  stroke-linejoin: round;
  font-family: "Open Sans", "Noto Sans", sans-serif;
  font-weight: 700;
`;

const TILE = { width: 675, height: 730 };

function Wallpaper() {
  return (
    <WallpaperSvg aria-hidden="true">
      <defs>
        <g id="doodle-tile" transform="scale(0.33333)">
          {doodles.map((g, i) => (
            <g key={i} transform={`translate(${g.dx} ${g.dy})`}>
              <path d={groupPath(g)} />
              {g.words?.map(([word, x, y, size, turn]) => (
                <text key={`${word}${x}`} fontSize={size} transform={`translate(${x} ${y}) rotate(${turn})`}>
                  {word}
                </text>
              ))}
            </g>
          ))}
        </g>
      </defs>
      {[0, 1].map((row) =>
        [-1, 0, 1, 2, 3].map((col) => (
          <use key={`${row}-${col}`} href="#doodle-tile" x={col * TILE.width} y={row * TILE.height} />
        )),
      )}
    </WallpaperSvg>
  );
}

/* ---------- layout ---------- */

const Page = styled.div`
  min-height: 100vh;
  display: flex;
  flex-direction: column;
  padding-bottom: 10px;
  background: #d8d4cf;
  color: #111b21;
  font-family: "Open Sans", "Noto Sans", "DejaVu Sans", sans-serif;
`;

const Header = styled.header`
  display: flex;
  align-items: flex-start;
  height: 71px;
  padding: 4px 17px 0 3px;
  background: #f0f1f6;
  border-bottom: 1px solid #e6eaed;
`;

const Contact = styled.div`
  flex: 1;
  display: flex;
  align-items: center;
  gap: 18px;
  height: 50px;
`;

const ContactName = styled.h1`
  margin: 0;
  font-size: 19px;
  line-height: 26px;
  font-weight: 400;
`;

const HeaderActions = styled.div`
  display: flex;
  align-items: center;
  gap: 19px;
  height: 52px;
`;

const CallButton = styled.button`
  display: flex;
  align-items: center;
  justify-content: center;
  gap: 10px;
  width: 77px;
  height: 50px;
  border: 1px solid #d5d9dd;
  border-radius: 25px;
  color: #a3acb2;
`;

const IconButton = styled.button`
  display: flex;
  align-items: center;
  justify-content: center;
  width: 38px;
  height: 50px;
  color: #54656f;
`;

const MenuSlot = styled.div`
  padding-left: 5px;
`;

const Chat = styled.main`
  position: relative;
  flex: 1;
  display: flex;
  flex-direction: column;
  justify-content: flex-end;
  background: #efeae2;
  overflow: hidden;
`;

const Thread = styled.div`
  position: relative;
  display: flex;
  flex-direction: column;
  gap: 14px;
  padding: 30px 80px 25px 61px;
`;

const RefreshButton = styled.button`
  align-self: center;
  display: flex;
  align-items: center;
  justify-content: center;
  width: 55px;
  height: 55px;
  margin-bottom: 16px;
  border-radius: 50%;
  background: #fff;
  color: #ccd4d9;
  box-shadow: 0 2px 5px rgba(11, 20, 26, 0.22);
`;

const DayLabel = styled.div`
  align-self: center;
  padding: 0 14px;
  border-radius: 9px;
  background: #fff;
  color: #54656f;
  font-size: 15px;
  line-height: 40px;
  box-shadow: 0 1px 1px rgba(11, 20, 26, 0.14);
`;

const Bubble = styled.div<{ $sent?: boolean; $wide?: boolean }>`
  position: relative;
  align-self: ${(p) => (p.$sent ? "flex-end" : "flex-start")};
  display: flex;
  align-items: flex-end;
  gap: 10px;
  width: ${(p) => (p.$wide ? "65%" : "auto")};
  padding: 9px 9px 9px 12px;
  border-radius: ${(p) => (p.$sent ? "9px 0 9px 9px" : "0 9px 9px 9px")};
  background: ${(p) => (p.$sent ? "#d9fdd3" : "#fff")};
  box-shadow: 0 1px 1px rgba(11, 20, 26, 0.18);
`;

const Tail = styled.svg<{ $sent?: boolean }>`
  position: absolute;
  top: 0;
  ${(p) => (p.$sent ? "left: 100%;" : "right: 100%; transform: scaleX(-1);")}
  fill: ${(p) => (p.$sent ? "#d9fdd3" : "#fff")};
`;

const MessageText = styled.p`
  margin: 0;
  direction: rtl;
  text-align: left;
  white-space: pre;
  font-family: "DejaVu Sans", sans-serif;
  font-size: 17px;
  line-height: 24px;
`;

const Latin = styled.span`
  font-family: "Open Sans", "Noto Sans", sans-serif;
`;

const Meta = styled.span<{ $over?: boolean }>`
  display: flex;
  align-items: center;
  gap: 4px;
  ${(p) => (p.$over ? "position: absolute; right: 9px; bottom: 4px;" : "margin-bottom: -5px;")}
  color: #667781;
  font-size: 13px;
  line-height: 18px;
  white-space: nowrap;
`;

const Composer = styled.form`
  display: flex;
  align-items: center;
  gap: 16px;
  padding: 10px 17px 12px 12px;
  background: #f0f1f6;
`;

const Field = styled.label`
  flex: 1;
  display: flex;
  align-items: center;
  gap: 18px;
  height: 55px;
  margin-left: 4px;
  padding: 0 16px;
  border-radius: 11px;
  background: #fff;
  color: #54656f;
`;

const MessageInput = styled.input`
  flex: 1;
  min-width: 0;
  height: 28px;
  outline: 0;
  color: #111b21;
  font-size: 18px;
  &::placeholder { color: #5f6f79; opacity: 1; }
`;

const Icon = styled.svg`
  display: block;
  flex: none;
  fill: currentColor;
`;

function BubbleTail({ sent }: { sent?: boolean }) {
  return (
    <Tail $sent={sent} width="9" height="14" viewBox="0 0 9 14" aria-hidden="true">
      <path d="M0 0H8Q10 1 8 3L0 13Z" />
    </Tail>
  );
}

function Ticks() {
  return (
    <Icon width="20" height="14" viewBox="0 0 20 14" role="img" aria-label="Delivered">
      <path d="M1 7.5L5 11.5L13.5 1M8.5 9.5L10.7 11.5L19 1" fill="none" stroke="#8696a0" strokeWidth="1.8" />
    </Icon>
  );
}

export default function App() {
  return (
    <Page>
      <GlobalStyle />
      <Header>
        <Contact>
          <Icon width="50" height="50" viewBox="0 0 50 50" aria-hidden="true">
            <defs>
              <clipPath id="avatar-clip">
                <circle cx="25" cy="25" r="24" />
              </clipPath>
            </defs>
            <circle cx="25" cy="25" r="25" fill="#dfe5e7" />
            <circle cx="25" cy="21" r="9" fill="#fff" />
            <ellipse cx="25" cy="49" rx="19" ry="16" fill="#fff" clipPath="url(#avatar-clip)" />
          </Icon>
          <ContactName>RD50CLIENT8052</ContactName>
        </Contact>
        <HeaderActions>
          <CallButton type="button" aria-label="Video call">
            <Icon width="26" height="17" viewBox="0 0 26 17">
              <rect x="1" y="1" width="18" height="15" rx="3.5" />
              <path d="M25.5 2.500V14.500Q20.500 12.500 20.500 8.500Q20.500 4.500 25.500 2.500Z" />
            </Icon>
            <Icon width="8" height="6" viewBox="0 0 8 6">
              <path d="M1 1L4 4L7 1" fill="none" stroke="currentColor" strokeWidth="1.4" />
            </Icon>
          </CallButton>
          <IconButton type="button" aria-label="Search">
            <Icon width="24" height="24" viewBox="0 0 24 24">
              <circle cx="9" cy="9" r="7" fill="none" stroke="currentColor" strokeWidth="2.5" />
              <path d="M14 14L22 22" stroke="currentColor" strokeWidth="3" />
            </Icon>
          </IconButton>
          <MenuSlot>
            <IconButton type="button" aria-label="Menu">
              <Icon width="6" height="22" viewBox="0 0 6 22">
                <circle cx="3" cy="3.5" r="2.6" />
                <circle cx="3" cy="11" r="2.6" />
                <circle cx="3" cy="18.5" r="2.6" />
              </Icon>
            </IconButton>
          </MenuSlot>
        </HeaderActions>
      </Header>

      <Chat>
        <Wallpaper />
        <Thread>
          <RefreshButton type="button" aria-label="Load older messages">
            <Icon width="22" height="22" viewBox="0 0 22 22">
              <path d="M17 5.500A8.500 8.500 0 1 0 19 14" fill="none" stroke="currentColor" strokeWidth="2.6" />
              <path d="M20.500 1V10H11.500Z" />
            </Icon>
          </RefreshButton>
          <DayLabel>TODAY</DayLabel>

          <Bubble $sent $wide>
            <BubbleTail sent />
            <MessageText>
              {"مساء الخير بشمهندسة جنان مع  حضرتك اداره عمليات "}
              <Latin>Radiance Group</Latin>
              {"بتابع مع حضرتك هل"}
              <br />
              {"تم الانتهاء من التسطيب و بدء الدبلومه ؟"}
            </MessageText>
            <Meta $over>
              11:53 am <Ticks />
            </Meta>
          </Bubble>

          <Bubble>
            <BubbleTail />
            <MessageText>اليوم ان شاء الله اول يوم للدبلومه</MessageText>
            <Meta>12:06 pm</Meta>
          </Bubble>

          <Bubble $sent>
            <BubbleTail sent />
            <MessageText>تمام بالتوفيق لحضرتك</MessageText>
            <Meta>
              12:16 pm <Ticks />
            </Meta>
          </Bubble>
        </Thread>
      </Chat>

      <Composer>
        <IconButton type="button" aria-label="Attach">
          <Icon width="23" height="23" viewBox="0 0 23 23">
            <path d="M11.5 0V23M0 11.500H23" stroke="#3b4a54" strokeWidth="3" />
          </Icon>
        </IconButton>
        <Field>
          <Icon width="30" height="28" viewBox="0 0 30 28" aria-hidden="true">
            <path
              d="M11 2.200H19Q26.500 2.200 26.500 9.500V14.500Q25 21 17 25.500H11Q3.500 25.500 3.500 18V9.500Q3.500 2.200 11 2.200Z"
              fill="none"
              stroke="currentColor"
              strokeWidth="2.4"
            />
            <path d="M16.500 25.500V21Q17 15.500 26 14.500" fill="none" stroke="currentColor" strokeWidth="2.2" />
            <circle cx="11" cy="9.5" r="1.8" />
            <circle cx="19.5" cy="9.5" r="1.8" />
            <path d="M9.500 14.500H21Q16.500 17 16 20.500Q11 20 9.500 14.500Z" />
          </Icon>
          <MessageInput type="text" placeholder="Type a message" aria-label="Type a message" />
        </Field>
        <IconButton type="button" aria-label="Record voice message">
          <Icon width="22" height="30" viewBox="0 0 22 30">
            <rect x="6.5" y="1" width="9" height="18" rx="4.5" />
            <path d="M1.500 14Q2.500 22.500 11 22.500Q19.500 22.500 20.500 14M11 22.500V29" fill="none" stroke="currentColor" strokeWidth="2.4" />
          </Icon>
        </IconButton>
      </Composer>
    </Page>
  );
}
